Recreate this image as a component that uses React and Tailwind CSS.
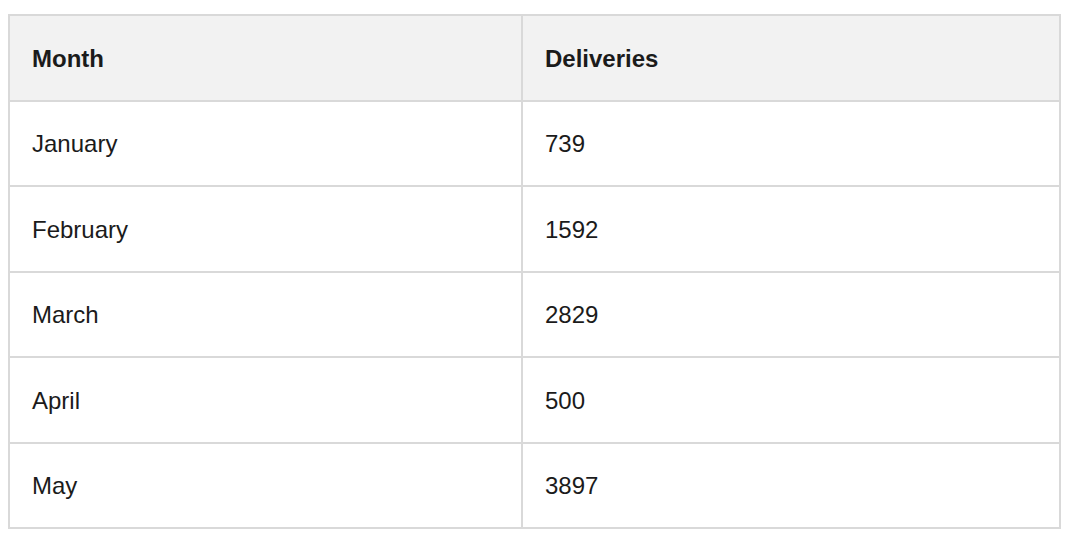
const rows = [
  ['January', '739'],
  ['February', '1592'],
  ['March', '2829'],
  ['April', '500'],
  ['May', '3897'],
];

export default function App() {
  return (
    <div className="w-[1080px] h-[544px] bg-white pt-[14px] pl-[8px]" style={{ fontFamily: '"Liberation Sans", Arial, sans-serif' }}>
      <table className="w-[1053px] border-collapse border-2 border-[#d9d9d9] text-[24px] text-[#1b1b1b]">
        <thead>
          <tr className="bg-[#f2f2f2]">
            <th className="w-[513px] h-[85.5px] border-2 border-[#d9d9d9] pl-[22px] pr-6 pt-[2px] text-left font-bold">Month</th>
            <th className="h-[85.5px] border-2 border-[#d9d9d9] pl-[22px] pr-6 pt-[2px] text-left font-bold">Deliveries</th>
          </tr>
        </thead>
        <tbody>
          {rows.map(([month, count]) => (
            <tr key={month}>
              <td className="h-[85.5px] border-2 border-[#d9d9d9] pl-[22px] pr-6 pt-[2px]">{month}</td>
              <td className="h-[85.5px] border-2 border-[#d9d9d9] pl-[22px] pr-6 pt-[2px]">{count}</td>
            </tr>
          ))}
        </tbody>
      </table>
    </div>
  );
}
